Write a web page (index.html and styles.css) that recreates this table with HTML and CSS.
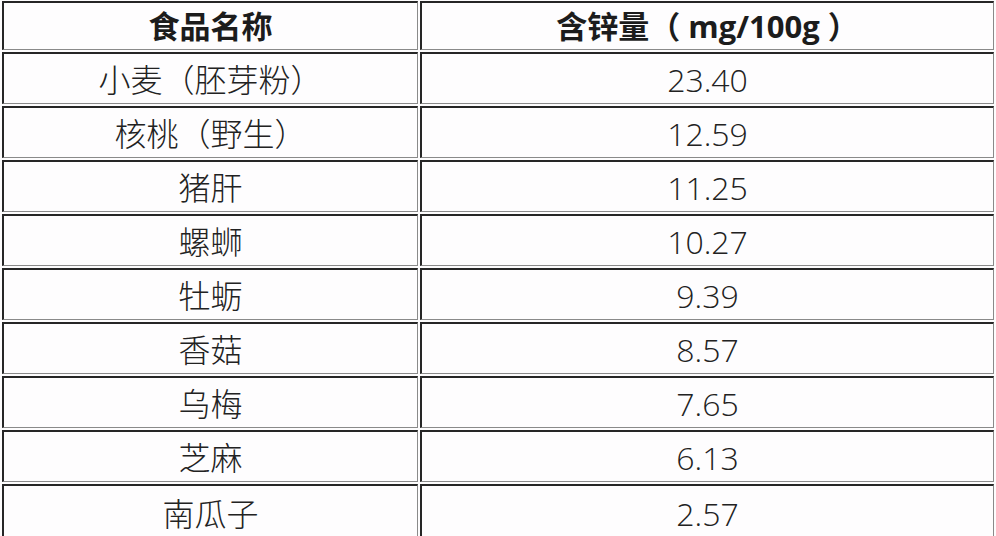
FILE: index.html
```html
<!DOCTYPE html>
<html lang="zh-CN">
<head>
<meta charset="utf-8">
<title>食品含锌量</title>
<link rel="stylesheet" href="styles.css">
</head>
<body>
<table class="zinc">
  <thead>
    <tr><th class="name">食品名称</th><th class="val">含锌量（ mg/100g ）</th></tr>
  </thead>
  <tbody>
    <tr><td class="name">小麦（胚芽粉）</td><td class="val">23.40</td></tr>
    <tr><td class="name">核桃（野生）</td><td class="val">12.59</td></tr>
    <tr><td class="name">猪肝</td><td class="val">11.25</td></tr>
    <tr><td class="name">螺蛳</td><td class="val">10.27</td></tr>
    <tr><td class="name">牡蛎</td><td class="val">9.39</td></tr>
    <tr><td class="name">香菇</td><td class="val">8.57</td></tr>
    <tr><td class="name">乌梅</td><td class="val">7.65</td></tr>
    <tr><td class="name">芝麻</td><td class="val">6.13</td></tr>
    <tr class="last"><td class="name">南瓜子</td><td class="val">2.57</td></tr>
  </tbody>
</table>
</body>
</html>
```
FILE: styles.css
```css
html, body {
  margin: 0;
  padding: 0;
  background: #fdfcfd;
}
body {
  width: 996px;
  height: 536px;
  overflow: hidden;
  font-family: "Open Sans", "Noto Sans CJK SC", sans-serif;
  color: #222;
}
.zinc {
  width: 996px;
  border-collapse: separate;
  border-spacing: 2px;
  table-layout: fixed;
  margin-top: -1px;
}
.zinc th,
.zinc td {
  box-sizing: border-box;
  padding: 0;
  text-align: center;
  vertical-align: middle;
  line-height: 1;
  border-top: 2px solid #262626;
  border-left: 2px solid #262626;
  border-right: 1px solid #8a8a8a;
  border-bottom: 1px solid #8a8a8a;
  background: #fefdfe;
}
.zinc th {
  height: 49px;
  font-size: 31px;
  font-weight: 700;
  color: #1c1c1c;
}
.zinc td {
  height: 52px;
  font-size: 32px;
  font-weight: 300;
  padding-top: 2px;
}
.zinc .name { width: 416px; }
.zinc .val { width: 574px; }
.zinc .last td { height: 56px; }
```
